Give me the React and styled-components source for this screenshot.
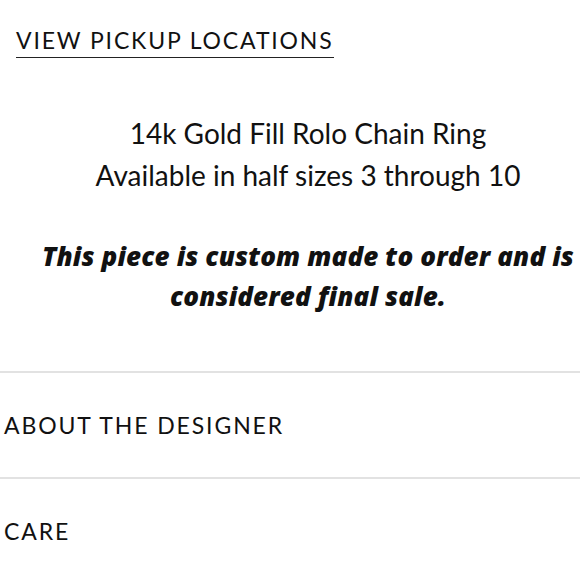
import React from 'react';
import styled, { createGlobalStyle } from 'styled-components';

const Global = createGlobalStyle`
  body {
    margin: 0;
    background: #fff;
    color: #111;
    font-family: Lato, "Open Sans", sans-serif;
  }
`;

const Page = styled.div`
  width: 580px;
  height: 580px;
  overflow: hidden;
`;

const PickupWrap = styled.div`
  padding: 26px 0 0 16px;
`;

const PickupLink = styled.a`
  display: inline-block;
  font-size: 23px;
  letter-spacing: 1.85px;
  line-height: 28px;
  color: #111;
  text-decoration: none;
  padding-bottom: 3px;
  border-bottom: 1.5px solid #222;
`;

const Description = styled.div`
  padding: 54px 0 0 36px;
  text-align: center;

  & p {
    margin: 0;
    font-size: 28px;
    line-height: 42px;
  }
`;

const Notice = styled.p`
  margin: 0;
  padding: 40px 0 0 36px;
  text-align: center;
  font-family: "Open Sans", Lato, sans-serif;
  font-size: 26px;
  line-height: 40px;
  font-weight: 800;
  font-style: italic;
  letter-spacing: 0.15px;
`;

const Accordion = styled.div`
  margin-top: 55px;
`;

const Row = styled.div`
  height: 104px;
  display: flex;
  align-items: center;
  padding-left: 4px;
  border-top: 2px solid #e2e2e2;
  font-size: 23px;
  letter-spacing: 1.9px;
`;

const rows = ['ABOUT THE DESIGNER', 'CARE'];

export default function App() {
  return (
    <Page>
      <Global />
      <PickupWrap>
        <PickupLink href="#">VIEW PICKUP LOCATIONS</PickupLink>
      </PickupWrap>
      <Description>
        <p>14k Gold Fill Rolo Chain Ring</p>
        <p>Available in half sizes 3 through 10</p>
      </Description>
      <Notice>
        This piece is custom made to order and is considered final sale.
      </Notice>
      <Accordion>
        {rows.map((r) => (
          <Row key={r}>{r}</Row>
        ))}
      </Accordion>
    </Page>
  );
}
